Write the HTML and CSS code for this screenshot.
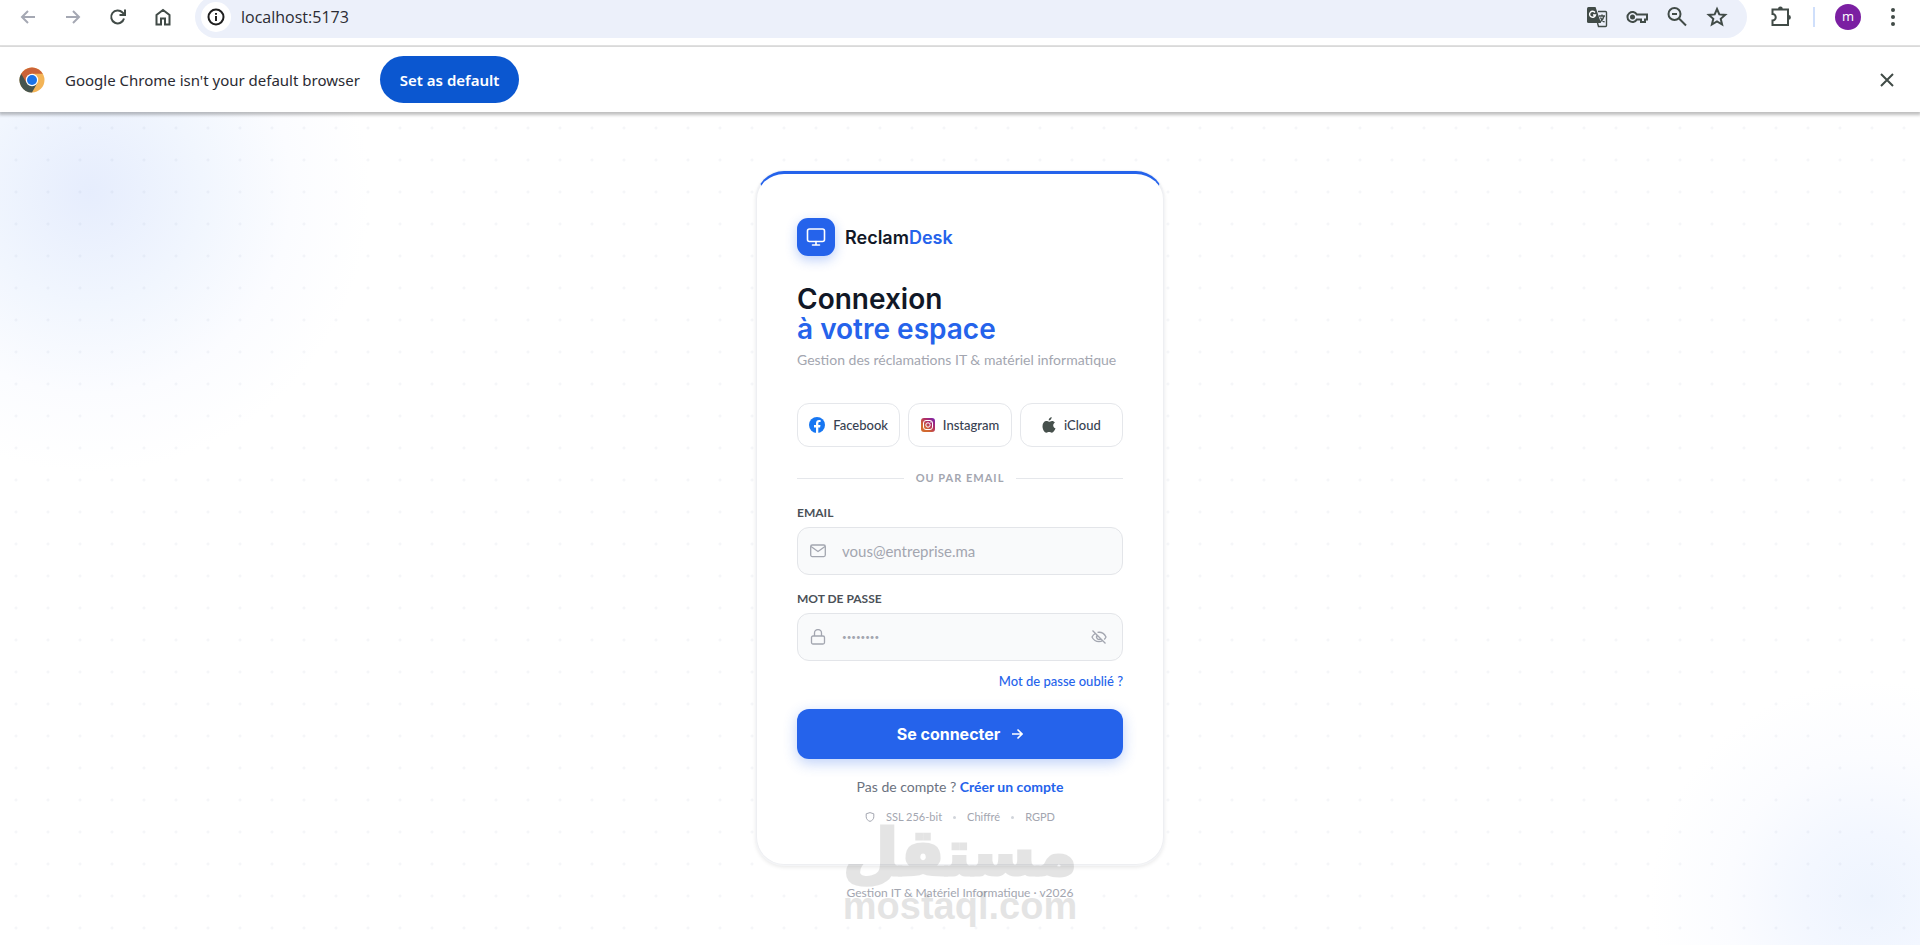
FILE: index.html
```html
<!DOCTYPE html>
<html lang="fr">
<head>
    <meta charset="UTF-8">
    <meta name="viewport" content="width=device-width, initial-scale=1.0">
    <title>ReclamDesk - Connexion</title>
    <link rel="stylesheet" href="styles.css">
</head>
<body>

    <!-- Browser toolbar -->
    <header class="toolbar">
        <div class="nav-buttons">
            <button class="tool-btn muted" aria-label="Back"><svg width="20" height="20" viewBox="0 0 20 20"><path d="M17 10H4M10 4l-6 6 6 6"/></svg></button>
            <button class="tool-btn muted" aria-label="Forward"><svg width="20" height="20" viewBox="0 0 20 20"><path d="M3 10h13M10 4l6 6-6 6"/></svg></button>
            <button class="tool-btn" aria-label="Reload"><svg width="20" height="20" viewBox="0 0 20 20"><path d="M16 11.500a6.500 6.500 0 1 1-1.500-6L17 8M17 2.500V8h-5.500"/></svg></button>
            <button class="tool-btn" aria-label="Home"><svg width="20" height="20" viewBox="0 0 20 20"><path d="M3.500 17.500V8L10 3l6.500 5v9.500H12v-6H8v6z"/></svg></button>
        </div>
        <div class="omnibox">
            <button class="site-info" aria-label="Site information"><svg width="20" height="20" viewBox="0 0 20 20"><circle cx="10" cy="10" r="7.500"/><path d="M10 9v5M10 6v1.800"/></svg></button>
            <input class="address" type="text" aria-label="Address" value="localhost:5173">
            <div class="omnibox-actions">
                <button class="tool-btn" aria-label="Translate">
                    <svg width="24" height="24" viewBox="0 0 24 24"><path class="solid" d="M3.500 2h7l5.500 16H3.500A1.500 1.500 0 0 1 2 16.500v-13A1.500 1.500 0 0 1 3.500 2z"/><path class="thin" d="M13 6.500h7.500a1 1 0 0 1 1 1v13a1 1 0 0 1-1 1h-7L12.500 18M14 11h6M17 9.500V11M19 11c-.5 2.500-2 4.500-4 6M15.500 12.500c.5 1.500 2 3.500 4 4.500"/><path class="thin light" d="M10 7.500A3 3 0 1 0 10.500 10H8"/></svg>
                </button>
                <button class="tool-btn" aria-label="Passwords">
                    <svg width="24" height="24" viewBox="0 0 24 24"><path d="M11.800 9.500a5 5 0 1 0 0 5H16V17h4v-2.500h2v-5z"/><circle class="solid" cx="7.500" cy="12" r="2.500"/></svg>
                </button>
                <button class="tool-btn" aria-label="Zoom">
                    <svg width="24" height="24" viewBox="0 0 24 24"><circle cx="9.500" cy="9" r="6"/><path d="M14 13.500l7 7M7 9h5"/></svg>
                </button>
                <button class="tool-btn" aria-label="Bookmark">
                    <svg width="24" height="24" viewBox="0 0 24 24"><path d="M12 4l2.300 5.400 5.900.5-4.500 3.900 1.400 5.700-5.100-3-5.100 3 1.400-5.700-4.500-3.900 5.900-.5z"/></svg>
                </button>
            </div>
        </div>
        <div class="toolbar-end">
            <button class="tool-btn" aria-label="Extensions">
                <svg width="24" height="24" viewBox="0 0 24 24"><path d="M3.500 4.500h15.500v15.500H3.500v-4.500a3 3 0 0 0 0-6.500z"/><path class="solid" d="M9 4a2.400 2.400 0 0 1 4.800 0zM19.500 10a2.400 2.400 0 0 1 0 4.800z"/></svg>
            </button>
            <span class="separator"></span>
            <button class="avatar" aria-label="Profile">m</button>
            <button class="tool-btn" aria-label="Menu">
                <svg width="24" height="24" viewBox="0 0 24 24"><circle class="solid" cx="12" cy="5" r="2"/><circle class="solid" cx="12" cy="12" r="2"/><circle class="solid" cx="12" cy="19" r="2"/></svg>
            </button>
        </div>
    </header>

    <!-- Default browser bar -->
    <div class="infobar">
        <svg class="chrome-logo" width="26" height="26" viewBox="0 0 26 26">
            <circle cx="13" cy="13" r="12.500" fill="#f3b457"/>
            <path d="M13 13L2.200 6.700A12.500 12.500 0 0 0 13 25.500l5.300-9.500z" fill="#46544e"/>
            <path d="M2.200 6.700A12.500 12.500 0 0 1 23.800 6.700H13L7.600 16z" fill="#cb6338"/>
            <circle cx="13" cy="13" r="6.200" fill="#fff"/>
            <circle cx="13" cy="13" r="5" fill="#1a73e8"/>
        </svg>
        <span class="infobar-text">Google Chrome isn't your default browser</span>
        <button class="default-btn">Set as default</button>
        <button class="tool-btn close-btn" aria-label="Close"><svg width="20" height="20" viewBox="0 0 20 20"><path d="M4 4l12 12M16 4L4 16"/></svg></button>
    </div>

    <!-- Login page -->
    <main class="page">
        <div class="card">
            <div class="brand">
                <div class="brand-icon">
                    <svg width="20" height="20" viewBox="0 0 20 20"><rect x="1.500" y="2" width="17" height="12.500" rx="2"/><path d="M10 14.500V18M6.500 18h7"/></svg>
                </div>
                <div class="brand-name">Reclam<span>Desk</span></div>
            </div>

            <h1 class="title">Connexion<br><span>à votre espace</span></h1>
            <p class="subtitle">Gestion des réclamations IT &amp; matériel informatique</p>

            <div class="social">
                <button class="social-btn">
                    <svg width="16" height="16" viewBox="0 0 16 16"><circle cx="8" cy="8" r="8" fill="#1877f2"/><path d="M7 16v-5.500H5V8h2V6.300C7 4.200 8.200 3 10.100 3l1.500.1v2h-1C9.600 5.100 9.300 5.700 9.300 6.400V8h2.200l-.4 2.500H9.300V16z" fill="#fff"/></svg>
                    Facebook
                </button>
                <button class="social-btn">
                    <svg width="14" height="14" viewBox="0 0 14 14">
                        <defs><linearGradient id="insta" x1="0" y1="1" x2="1" y2="0"><stop offset="0.300" stop-color="#d2692f"/><stop offset="0.600" stop-color="#b32f62"/><stop offset="1" stop-color="#7420b4"/></linearGradient></defs>
                        <rect width="14" height="14" rx="3" fill="url(#insta)"/>
                        <rect x="2.500" y="2.500" width="9" height="9" rx="2.500" fill="none" stroke="#fff"/>
                        <circle cx="7" cy="7" r="2.200" fill="none" stroke="#fff"/>
                        <circle cx="10" cy="4" r="0.700" fill="#fff"/>
                    </svg>
                    Instagram
                </button>
                <button class="social-btn">
                    <svg width="14" height="16" viewBox="0 0 14 16"><path d="M9.700 0c.1 1.900-1.300 3.500-3 3.500C6.500 1.800 8 .2 9.700 0zM7 4.700c.7 0 1.700-.8 3-.8 1.200 0 2.300.7 2.900 1.500-2.500 1.500-2.100 4.900.6 5.900-.6 1.700-2 4.400-3.700 4.400-1 0-1.500-.6-2.700-.6s-1.700.6-2.700.6C2.500 15.700.5 12.400.5 9.200.5 6 2.400 4 4.300 4c1.200 0 2.100.7 2.700.7z" fill="#46504c"/></svg>
                    iCloud
                </button>
            </div>

            <div class="divider">OU PAR EMAIL</div>

            <form class="login-form">
                <label class="label" for="email">EMAIL</label>
                <div class="field">
                    <svg width="16" height="16" viewBox="0 0 16 16"><rect x="0.700" y="2" width="14.600" height="11.600" rx="1.500"/><path d="M1 3.500L8 8.500l7-5"/></svg>
                    <input type="email" id="email" placeholder="vous@entreprise.ma">
                </div>

                <label class="label" for="password">MOT DE PASSE</label>
                <div class="field">
                    <svg width="16" height="16" viewBox="0 0 16 16"><rect x="1.500" y="7" width="13" height="8" rx="1.500"/><path d="M4.500 7V4a3.500 3.500 0 0 1 7 0v3"/></svg>
                    <input type="password" id="password" placeholder="••••••••">
                    <button type="button" class="eye-btn" aria-label="Afficher le mot de passe">
                        <svg width="16" height="16" viewBox="0 0 16 16"><path d="M4.500 4.500C3 5.300 1.800 6.500 1 8c1.500 3 4 4.700 7 4.700 1.300 0 2.500-.3 3.500-.9M6.500 3.400C10 2.800 13.300 4.600 15 8c-.5 1-1.100 1.800-1.800 2.500M6.300 6.300a2.400 2.400 0 0 0 3.400 3.400M1.500 1.500l13 13"/></svg>
                    </button>
                </div>

                <a href="#" class="forgot">Mot de passe oublié ?</a>

                <button type="submit" class="submit-btn">
                    Se connecter
                    <svg width="12" height="12" viewBox="0 0 12 12"><path d="M1 6h10M6.500 1.500L11 6l-4.500 4.500"/></svg>
                </button>
            </form>

            <p class="signup">Pas de compte ? <a href="#">Créer un compte</a></p>

            <div class="security">
                <svg width="10" height="10" viewBox="0 0 10 10"><path d="M5 .6l3.800 1.200v3c0 2.200-1.500 3.800-3.800 4.600C2.700 8.600 1.200 7 1.200 4.800v-3z"/></svg>
                <span>SSL 256-bit</span>
                <span class="dot"></span>
                <span>Chiffré</span>
                <span class="dot"></span>
                <span>RGPD</span>
            </div>
        </div>

        <footer class="page-footer">Gestion IT &amp; Matériel Informatique · v2026</footer>
    </main>

    <div class="watermark">
        <span class="watermark-ar" lang="ar">مستقل</span>
        <span class="watermark-en">mostaql.com</span>
    </div>

</body>
</html>
```
FILE: styles.css
```css
/* Global Styles */
* {
    box-sizing: border-box;
}

body {
    font-family: 'Lato', sans-serif;
    margin: 0;
    display: flex;
    flex-direction: column;
    min-height: 100vh;
    background-color: #fff;
    color: #111827;
}

button,
input {
    font-family: inherit;
}

button {
    cursor: pointer;
}

svg {
    flex-shrink: 0;
}

/* Browser toolbar */
.toolbar {
    display: flex;
    align-items: center;
    margin-top: -4px;
    padding: 0 15px 7px 16px;
    border-bottom: 2px solid #e3e3e3;
    font-family: 'Open Sans', sans-serif;
}

.nav-buttons {
    display: flex;
    gap: 21px;
    margin-right: 20px;
}

.tool-btn {
    display: flex;
    padding: 0;
    min-width: 24px;
    justify-content: center;
    border: none;
    background: none;
    color: #414b47;
}

.tool-btn.muted {
    color: #a5a8b3;
}

.tool-btn svg,
.site-info svg {
    fill: none;
    stroke: currentColor;
    stroke-width: 2;
}

.tool-btn .solid {
    fill: currentColor;
    stroke: none;
}

.tool-btn .thin {
    stroke-width: 1.4;
}

.tool-btn .light {
    stroke: #fff;
}

.omnibox {
    flex: 1;
    display: flex;
    align-items: center;
    height: 42px;
    padding: 0 18px 0 6px;
    border-radius: 21px;
    background-color: #ecf0fa;
}

.site-info {
    display: flex;
    align-items: center;
    justify-content: center;
    width: 30px;
    height: 30px;
    padding: 0;
    border: none;
    border-radius: 50%;
    background-color: #fff;
    color: #1f1f1f;
}

.address {
    flex: 1;
    min-width: 0;
    padding: 0 0 0 10px;
    border: none;
    background: none;
    font-size: 16px;
    color: #2b2b33;
}

.omnibox-actions {
    display: flex;
    gap: 16px;
}

.toolbar-end {
    display: flex;
    align-items: center;
    gap: 20px;
    margin-left: 22px;
}

.separator {
    width: 2px;
    height: 20px;
    background-color: #cfdffb;
}

.avatar {
    width: 26px;
    height: 26px;
    padding: 0 0 2px;
    border: none;
    border-radius: 50%;
    background-color: #7b1fa2;
    color: #fff;
    font-size: 13px;
}

/* Default browser bar */
.infobar {
    display: flex;
    align-items: center;
    min-height: 65px;
    padding: 0 21px 0 19px;
    background-color: #fff;
    box-shadow: 0 2px 3px 1px rgba(0, 0, 0, 0.25);
    font-family: 'Noto Sans', sans-serif;
    z-index: 1;
}

.infobar-text {
    margin: 0 20px;
    font-size: 15px;
    color: #2b2b33;
}

.default-btn {
    padding: 0 20px;
    height: 47px;
    border: none;
    border-radius: 24px;
    background-color: #0b57d0;
    color: #fff;
    font-size: 15px;
    font-weight: 600;
}

.close-btn {
    margin-left: auto;
}

/* Page background */
.page {
    flex: 1;
    display: flex;
    flex-direction: column;
    align-items: center;
    padding: 59px 20px 20px;
    background:
        radial-gradient(circle, rgba(60, 80, 130, 0.05) 1px, transparent 2px) 0 0 / 32px 32px,
        radial-gradient(circle 280px at 90px 80px, #e6edfd, #f1f6fe 40%, #fbfcff 72%, transparent),
        radial-gradient(circle 220px at calc(100% - 50px) calc(100% - 45px), #eef4fe, #f3f7ff 30%, #fbfcff 65%, transparent);
}

/* Card */
.card {
    width: 100%;
    max-width: 408px;
    padding: 44px 40px 39px;
    border: 1px solid #eeeff2;
    border-top: 3px solid #2563eb;
    border-radius: 28px;
    background-color: #fff;
    box-shadow: 0 0 0 1px #f4f5f7, 0 2px 4px rgba(0, 0, 0, 0.1);
}

.brand {
    display: flex;
    align-items: center;
    gap: 10px;
    margin-bottom: 28px;
}

.brand-icon {
    display: flex;
    align-items: center;
    justify-content: center;
    width: 38px;
    height: 38px;
    border-radius: 11px;
    background-color: #2563eb;
    box-shadow: 0 4px 12px rgba(37, 99, 235, 0.3);
}

.brand-icon svg {
    fill: none;
    stroke: #fff;
    stroke-width: 1.6;
    stroke-linecap: round;
}

.brand-name {
    font-family: 'Inter', sans-serif;
    font-size: 18px;
    font-weight: 600;
}

.brand-name span,
.title span {
    color: #2563eb;
}

.title {
    margin: 0 0 6px;
    font-family: 'Inter', sans-serif;
    font-size: 28px;
    line-height: 30px;
    font-weight: 600;
}

.subtitle {
    margin: 0 0 33px;
    font-size: 14px;
    line-height: 20px;
    color: #a3a6b0;
}

/* Social buttons */
.social {
    display: grid;
    grid-template-columns: repeat(3, 1fr);
    gap: 8px;
    margin-bottom: 21px;
}

.social-btn {
    display: flex;
    align-items: center;
    justify-content: center;
    gap: 8px;
    height: 44px;
    padding: 0;
    border: 1px solid #e5e7eb;
    border-radius: 12px;
    background-color: #fff;
    color: #374151;
    font-size: 13px;
    font-weight: 500;
}

.divider {
    display: flex;
    align-items: center;
    gap: 12px;
    margin-bottom: 17px;
    font-size: 11px;
    line-height: 20px;
    font-weight: bold;
    letter-spacing: 1px;
    color: #a3a6b0;
}

.divider::before,
.divider::after {
    content: "";
    flex: 1;
    height: 1px;
    background-color: #e5e7eb;
}

/* Form */
.login-form {
    display: flex;
    flex-direction: column;
}

.label {
    margin-bottom: 6px;
    font-size: 12px;
    line-height: 16px;
    font-weight: bold;
    color: #4b5158;
}

.field {
    display: flex;
    align-items: center;
    height: 48px;
    padding: 0 15px 0 12px;
    margin-bottom: 16px;
    border: 1px solid #e3e5e9;
    border-radius: 12px;
    background-color: #f9fafb;
}

.field svg {
    fill: none;
    stroke: #a3a6b0;
    stroke-width: 1.3;
}

.field input {
    flex: 1;
    min-width: 0;
    padding: 0 0 0 16px;
    border: none;
    outline: none;
    background: none;
    font-size: 15px;
    color: #111827;
}

.field input::placeholder {
    color: #a3a6b0;
}

.field input[type="password"]:placeholder-shown {
    font-size: 8px;
}

.eye-btn {
    display: flex;
    padding: 0;
    border: none;
    background: none;
}

.forgot {
    align-self: flex-end;
    margin-bottom: 19px;
    margin-top: -5px;
    font-size: 13px;
    line-height: 18px;
    font-weight: 500;
    color: #2563eb;
    text-decoration: none;
}

.submit-btn {
    display: flex;
    align-items: center;
    justify-content: center;
    gap: 11px;
    height: 50px;
    border: none;
    border-radius: 12px;
    background-color: #2563eb;
    color: #fff;
    box-shadow: 0 4px 14px rgba(37, 99, 235, 0.3);
    font-family: 'Inter', sans-serif;
    font-size: 16px;
    font-weight: 700;
}

.submit-btn svg {
    fill: none;
    stroke: #fff;
    stroke-width: 1.6;
}

.signup {
    margin: 18px 0 12px;
    font-size: 14px;
    line-height: 20px;
    text-align: center;
    color: #6b7280;
}

.signup a {
    color: #2563eb;
    font-weight: bold;
    text-decoration: none;
}

.security {
    display: flex;
    align-items: center;
    justify-content: center;
    gap: 11px;
    font-size: 11px;
    line-height: 16px;
    color: #a3a6b0;
}

.security svg {
    fill: none;
    stroke: #a3a6b0;
}

.dot {
    width: 3px;
    height: 3px;
    border-radius: 50%;
    background-color: #d1d5db;
}

.page-footer {
    margin-top: 20px;
    font-size: 12px;
    line-height: 16px;
    color: #a3a6b0;
}

/* Watermark over the page */
.watermark {
    position: absolute;
    left: 0;
    right: 0;
    bottom: 20px;
    display: flex;
    flex-direction: column;
    align-items: center;
    opacity: 0.1;
    color: #000;
    pointer-events: none;
    z-index: 2;
}

.watermark-ar {
    font-family: 'DejaVu Sans', sans-serif;
    font-size: 64px;
    line-height: 68px;
    font-weight: bold;
    -webkit-text-stroke: 3px #000;
}

.watermark-en {
    font-family: 'Liberation Sans', sans-serif;
    font-size: 38px;
    line-height: 38px;
    font-weight: bold;
}
```
